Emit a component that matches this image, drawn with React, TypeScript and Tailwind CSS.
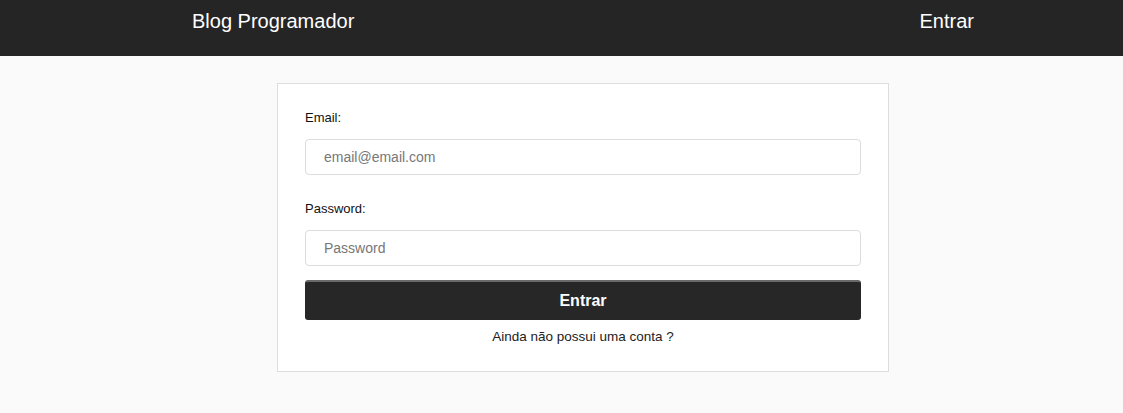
export default function App() {
  return (
    <div className="min-h-screen bg-[#fafafa] font-['Liberation_Sans',Arial,sans-serif]">
      <nav className="h-14 bg-[#252525] flex items-start justify-between pl-[192px] pr-[149px] pt-[7px]">
        <a className="text-white text-[20px] leading-7">Blog Programador</a>
        <a className="text-white text-[20px] leading-7">Entrar</a>
      </nav>

      <main className="flex justify-center pt-[27px] pl-[43px]">
        <form className="w-[612px] bg-white border border-[#dddddd] px-[27px] pt-[24px] pb-[24px] flex flex-col">
          <label className="text-[13px] leading-5 text-[#111]">Email:</label>
          <input
            type="email"
            placeholder="email@email.com"
            className="mt-[11px] h-9 rounded border border-[#dcdcdc] pl-[18px] text-[14px] text-[#333] placeholder:text-[#777] outline-none"
          />

          <label className="mt-[24px] text-[13px] leading-5 text-[#111]">Password:</label>
          <input
            type="password"
            placeholder="Password"
            className="mt-[11px] h-9 rounded border border-[#dcdcdc] pl-[18px] text-[14px] text-[#333] placeholder:text-[#777] outline-none"
          />

          <button
            type="button"
            className="mt-[14px] h-10 rounded-[3px] bg-[#272727] border-t-2 border-[#6a6a6a] text-white text-[16px] font-bold"
          >
            Entrar
          </button>

          <p className="mt-[7px] text-center text-[13.5px] leading-5 text-[#222]">Ainda não possui uma conta ?</p>
        </form>
      </main>
    </div>
  );
}
